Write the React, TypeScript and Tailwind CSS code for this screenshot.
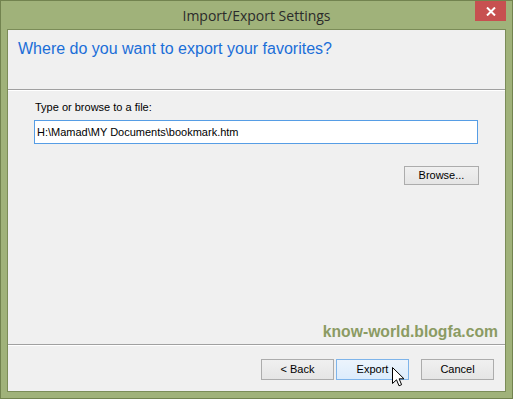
import React from "react";

const btn =
  "w-[73px] h-[21px] border text-[11px] text-black flex items-center justify-center";

function Cursor() {
  return (
    <svg
      className="absolute left-[55px] top-[7px]"
      width="13"
      height="21"
      viewBox="0 0 13 21"
    >
      <path
        d="M0.5 0.5 L0.5 16.5 L4.5 12.8 L7 18.8 L9.6 17.7 L7.1 11.8 L12 11.8 Z"
        fill="#fff"
        stroke="#000"
        strokeWidth="1"
        strokeLinejoin="miter"
      />
    </svg>
  );
}

export default function App() {
  return (
    <div
      className="w-[513px] h-[399px] border border-[#72834f] bg-[#a0b27a] flex flex-col px-[6px] pb-[6px]"
      style={{ fontFamily: '"Liberation Sans", Arial, sans-serif' }}
    >
      {/* title bar */}
      <div className="h-[28px] relative flex items-center justify-center">
        <span
          className="text-[14px] text-[#2b2b2b] leading-none mt-[2px]"
          style={{ fontFamily: '"Open Sans", "Noto Sans", sans-serif' }}
        >
          Import/Export Settings
        </span>
        <div className="absolute right-0 top-0 w-[31px] h-[20px] bg-[#c75050] flex items-center justify-center">
          <svg width="10" height="9" viewBox="0 0 10 9">
            <path d="M1 0.5 L9 8.5 M9 0.5 L1 8.5" stroke="#fff" strokeWidth="2" />
          </svg>
        </div>
      </div>

      {/* dialog body */}
      <div className="flex-1 border border-[#7b8c58] bg-[#f0f0f0] flex flex-col">
        <div className="h-[59px] pt-[9px] pl-[10px]">
          <h1 className="text-[16px] leading-[20px] text-[#1b6ed8]">
            Where do you want to export your favorites?
          </h1>
        </div>
        <div className="h-px bg-[#a0a0a0]" />
        <div className="h-px bg-white" />

        <div className="flex-1 flex flex-col">
          <label className="mt-[10px] ml-[27px] text-[11px] leading-[13px] text-black">
            Type or browse to a file:
          </label>
          <div className="mt-[6px] ml-[26px] w-[444px] h-[24px] border border-[#569de5] bg-white flex items-center pl-[2px] text-[11px] text-black">
            H:\Mamad\MY Documents\bookmark.htm
          </div>
          <div className="self-end mr-[26px] mt-[22px] w-[75px] h-[19px] border border-[#acacac] bg-gradient-to-b from-[#f0f0f0] to-[#e5e5e5] flex items-center justify-center text-[11px] text-black">
            Browse...
          </div>
          <div className="mt-auto self-end pr-[7px] pb-[4px] text-[15.7px] leading-[17px] font-bold text-[#8b9b63]">
            know-world.blogfa.com
          </div>
        </div>

        <div className="h-px bg-[#a0a0a0]" />
        <div className="h-px bg-white" />

        <div className="h-[45px] pt-[13px] pr-[11px] flex justify-end items-start">
          <div className={`${btn} border-[#acacac] bg-gradient-to-b from-[#f0f0f0] to-[#e5e5e5]`}>
            &lt; Back
          </div>
          <div className={`${btn} ml-[2px] relative border-[#7eb4ea] bg-gradient-to-b from-[#ecf4fc] to-[#dcecfc]`}>
            Export
            <Cursor />
          </div>
          <div className={`${btn} ml-[12px] border-[#acacac] bg-gradient-to-b from-[#f0f0f0] to-[#e5e5e5]`}>
            Cancel
          </div>
        </div>
      </div>
    </div>
  );
}
